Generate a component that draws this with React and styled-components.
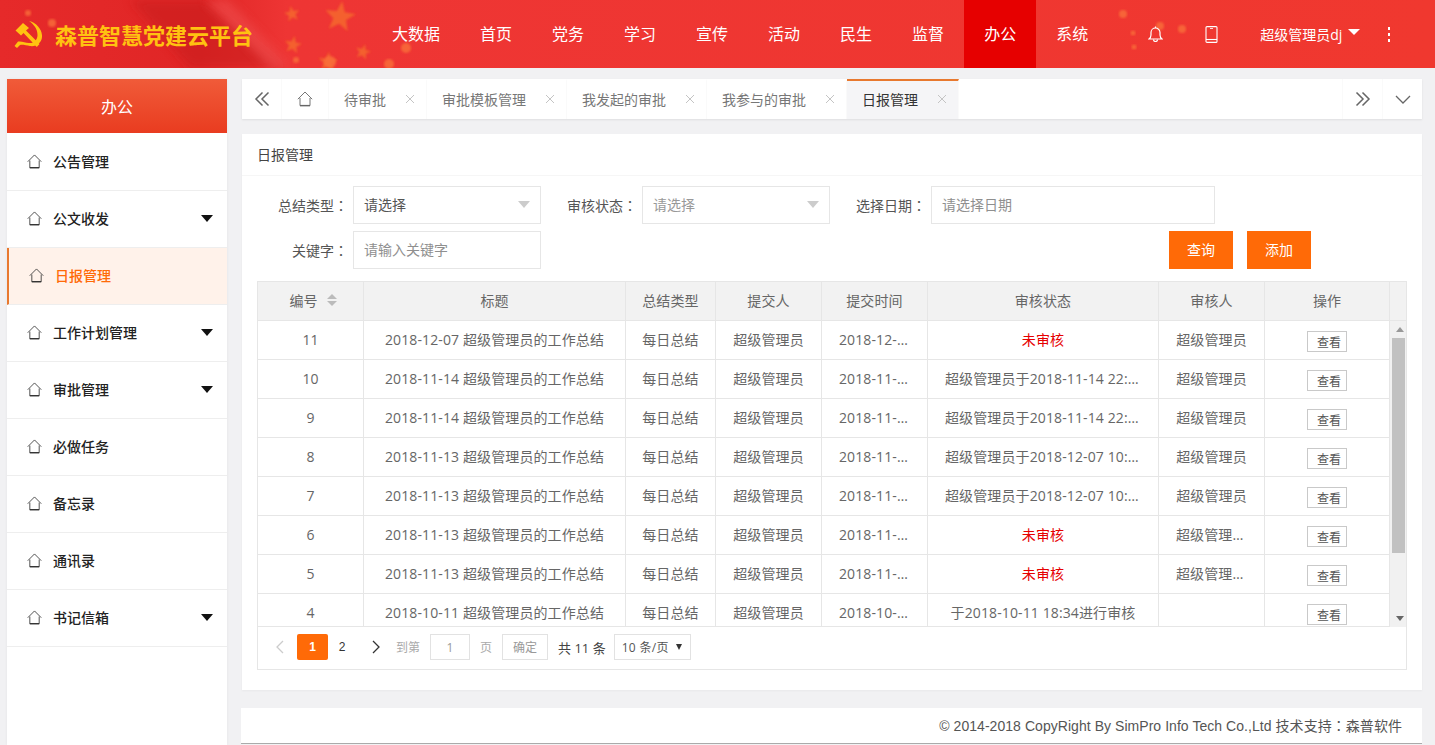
import React from 'react';
import styled, { createGlobalStyle } from 'styled-components';

const FONT = '"Open Sans", "Noto Sans CJK SC", sans-serif';
const ORANGE = '#ff6a07';
const COLUMNS = '106px 262px 90px 106px 106px 231px 106px 125px';

const GlobalStyle = createGlobalStyle`
  html, body {
    margin: 0;
    height: 745px;
    overflow: hidden;
    background: #f1f1f3;
    font-family: ${FONT};
    font-size: 14px;
    color: #666;
  }
  * { box-sizing: border-box; }
`;

const Page = styled.div`
  display: flex;
  flex-direction: column;
  height: 745px;
`;

const Header = styled.header`
  position: relative;
  display: flex;
  align-items: stretch;
  height: 68px;
  flex: none;
  background: #ee3531;
  color: #fff;
  overflow: hidden;
`;

const HeaderArt = styled.svg`
  position: absolute;
  inset: 0;
  width: 100%;
  height: 100%;
`;

const Brand = styled.div`
  position: relative;
  display: flex;
  align-items: center;
  gap: 13px;
  width: 372px;
  padding-left: 14px;
`;

const BrandName = styled.span`
  font-size: 22px;
  font-weight: 700;
  color: #ffc211;
  white-space: nowrap;
  font-family: "Noto Sans CJK SC", sans-serif;
`;

const Nav = styled.nav`
  position: relative;
  display: flex;
`;

const NavItem = styled.a`
  display: flex;
  align-items: center;
  justify-content: center;
  padding: 0 20px 2px;
  font-size: 16px;
  background: ${(p) => (p.$active ? '#e60000' : 'transparent')};
`;

const Actions = styled.div`
  position: relative;
  display: flex;
  align-items: center;
  margin-left: 19px;
`;

const ActionIcon = styled.span`
  display: flex;
  justify-content: center;
  width: 56px;
`;

const UserName = styled.span`
  display: flex;
  align-items: center;
  gap: 6px;
  margin-left: 21px;
  font-size: 14px;
  white-space: nowrap;
`;

const UserCaret = styled.i`
  width: 0;
  height: 0;
  margin-top: -5px;
  border-left: 6px solid transparent;
  border-right: 6px solid transparent;
  border-top: 6px solid #fff;
`;

const Dots = styled.span`
  display: flex;
  flex-direction: column;
  gap: 3px;
  margin-left: 28px;
  i {
    width: 2px;
    height: 3px;
    background: #fff;
  }
`;

const Body = styled.div`
  display: flex;
  flex: 1;
  min-height: 0;
  padding-top: 11px;
`;

const Sidebar = styled.aside`
  width: 220px;
  margin-left: 7px;
  flex: none;
  background: #fff;
  box-shadow: 0 0 3px rgba(0, 0, 0, 0.06);
`;

const SideTitle = styled.div`
  display: flex;
  align-items: center;
  justify-content: center;
  height: 54px;
  margin-bottom: 1px;
  color: #fff;
  font-size: 16px;
  background: linear-gradient(#f05b39, #e93c20);
`;

const SideItem = styled.a`
  display: flex;
  align-items: center;
  gap: 11px;
  height: 57px;
  padding: 0 14px 2px 20px;
  font-size: 14px;
  font-weight: 500;
  color: ${(p) => (p.$active ? ORANGE : '#222')};
  background: ${(p) => (p.$active ? '#fff2ea' : '#fff')};
  border-bottom: 1px solid #eeeeee;
  border-left: ${(p) => (p.$active ? '2px solid #e8792f' : 'none')};
`;

const SideCaret = styled.i`
  width: 0;
  height: 0;
  margin-left: auto;
  border-left: 6.5px solid transparent;
  border-right: 6.5px solid transparent;
  border-top: 7px solid #111;
`;

const Main = styled.main`
  display: flex;
  flex-direction: column;
  width: 1180px;
  margin-left: 15px;
`;

const TabBar = styled.div`
  display: flex;
  align-items: stretch;
  height: 40px;
  flex: none;
  background: #fff;
  box-shadow: 0 1px 2px rgba(0, 0, 0, 0.08);
`;

const TabControl = styled.span`
  display: flex;
  align-items: center;
  justify-content: center;
  flex: none;
  width: ${(p) => p.$w || 40}px;
  border-right: ${(p) => (p.$edge === 'right' ? '1px solid #fafafa' : 'none')};
  border-left: ${(p) => (p.$edge === 'left' ? '1px solid #fafafa' : 'none')};
`;

const Tab = styled.div`
  display: flex;
  align-items: center;
  padding: 0 11px 2px 15px;
  font-size: 14px;
  white-space: nowrap;
  color: ${(p) => (p.$active ? '#333' : '#777')};
  background: ${(p) => (p.$active ? '#f5f5f7' : '#fff')};
  border-right: 1px solid #fafafa;
  border-top: 2px solid ${(p) => (p.$active ? '#e8792f' : 'transparent')};
`;

const TabClose = styled.svg`
  width: 10px;
  height: 10px;
  margin-left: 19px;
`;

const TabSpacer = styled.div`
  flex: 1;
`;

const Card = styled.section`
  height: 556px;
  margin-top: 15px;
  flex: none;
  background: #fff;
  box-shadow: 0 1px 2px rgba(0, 0, 0, 0.04);
`;

const CardTitle = styled.div`
  display: flex;
  align-items: center;
  height: 42px;
  padding: 0 0 2px 15px;
  font-size: 14px;
  color: #444;
  border-bottom: 1px solid #f6f6f6;
`;

const Filters = styled.div`
  display: flex;
  flex-direction: column;
  gap: 7px;
  padding: 10px 15px 12px;
`;

const FilterRow = styled.div`
  display: flex;
  align-items: center;
  height: 38px;
`;

const Label = styled.label`
  flex: none;
  width: ${(p) => p.$w}px;
  margin-left: ${(p) => p.$gap || 0}px;
  margin-right: 5px;
  text-align: right;
  white-space: nowrap;
  font-size: 14px;
  color: #555;
`;

const Colon = styled.span`
  font-family: "Noto Sans CJK TC", sans-serif;
`;

const Select = styled.div`
  display: flex;
  align-items: center;
  justify-content: space-between;
  width: 188px;
  height: 38px;
  padding: 0 10px 2px;
  font-size: 14px;
  color: ${(p) => (p.$muted ? '#999' : '#555')};
  border: 1px solid #e6e6e6;
  i {
    width: 0;
    height: 0;
    border-left: 6px solid transparent;
    border-right: 6px solid transparent;
    border-top: 7px solid #ccc;
  }
`;

const TextInput = styled.input`
  width: ${(p) => p.$w}px;
  height: 38px;
  padding: 0 10px 2px;
  font: 14px ${FONT};
  color: #555;
  border: 1px solid #e6e6e6;
  outline: none;
  &::placeholder { color: #8f8f8f; }
`;

const FilterButtons = styled.div`
  display: flex;
  gap: 14px;
  margin-left: auto;
  margin-right: 96px;
`;

const OrangeButton = styled.button`
  width: 64px;
  height: 38px;
  padding: 0 0 2px;
  border: none;
  color: #fff;
  background: ${ORANGE};
  font: 14px ${FONT};
`;

const TableBox = styled.div`
  height: 389px;
  margin: 0 15px;
  border: 1px solid #e6e6e6;
`;

const HeadRow = styled.div`
  display: grid;
  grid-template-columns: ${COLUMNS} 16px;
  height: 39px;
  background: #f2f2f2;
  border-bottom: 1px solid #e6e6e6;
`;

const TableBody = styled.div`
  display: flex;
  height: 306px;
`;

const Rows = styled.div`
  flex: 1;
  overflow: hidden;
  border-bottom: 1px solid #e6e6e6;
`;

const ScrollTrack = styled.div`
  display: flex;
  flex-direction: column;
  width: 16px;
  flex: none;
  background: #f1f1f1;
`;

const ScrollArrow = styled.span`
  display: flex;
  align-items: center;
  justify-content: center;
  height: 17px;
  padding-left: 3px;
  margin-top: ${(p) => (p.$down ? 'auto' : 0)};
  i {
    width: 0;
    height: 0;
    border-left: 4.5px solid transparent;
    border-right: 4.5px solid transparent;
    border-bottom: ${(p) => (p.$down ? 'none' : '5px solid #999')};
    border-top: ${(p) => (p.$down ? '5px solid #666' : 'none')};
  }
`;

const ScrollThumb = styled.div`
  height: 215px;
  margin: 0 1px 0 2px;
  background: #c1c1c1;
`;

const Row = styled.div`
  display: grid;
  grid-template-columns: ${COLUMNS};
  height: 39px;
  border-bottom: 1px solid #e6e6e6;
`;

const Cell = styled.div`
  padding: 0 ${(p) => (p.$tight ? 5 : 17)}px;
  line-height: 37px;
  text-align: center;
  overflow: hidden;
  white-space: nowrap;
  text-overflow: ellipsis;
  font-size: 14px;
  letter-spacing: 0.12px;
  color: ${(p) => (p.$alert ? '#e60000' : '#666')};
  border-right: 1px solid #e6e6e6;
`;

const HeadCell = styled(Cell)`
  display: flex;
  align-items: center;
  justify-content: center;
  gap: 9px;
  padding: 0 ${(p) => (p.$sort ? '12px' : '5px')} 2px ${(p) => (p.$sort ? '17px' : '5px')};
  line-height: normal;
  &:last-child { border-right: none; }
`;

const SortIcon = styled.span`
  display: flex;
  flex-direction: column;
  gap: 2px;
  i {
    width: 0;
    height: 0;
    border-left: 5px solid transparent;
    border-right: 5px solid transparent;
  }
  i:first-child { border-bottom: 5px solid #bbb; }
  i:last-child { border-top: 5px solid #bbb; }
`;

const ViewButton = styled.button`
  display: block;
  width: 40px;
  height: 21px;
  margin: 10px auto 0;
  padding: 2px 0 0 4px;
  background: #fff;
  border: 1px solid #c9c9c9;
  color: #555;
  font: 12px/1 ${FONT};
`;

const ActionCell = styled(Cell)`
  padding: 0;
`;

const Pager = styled.div`
  display: flex;
  align-items: center;
  height: 42px;
  padding: 0 0 2px 6px;
  font-size: 12px;
`;

const PagerArrow = styled.span`
  display: flex;
  align-items: center;
  justify-content: center;
  width: ${(p) => p.$w}px;
  margin-right: ${(p) => p.$after || 0}px;
`;

const PageNumber = styled.span`
  display: flex;
  align-items: center;
  justify-content: center;
  width: ${(p) => (p.$active ? 31 : 28)}px;
  height: 26px;
  border-radius: 2px;
  font-family: "Liberation Sans", sans-serif;
  font-size: 12px;
  font-weight: ${(p) => (p.$active ? 700 : 400)};
  color: ${(p) => (p.$active ? '#fff' : '#333')};
  background: ${(p) => (p.$active ? ORANGE : 'transparent')};
`;

const PagerText = styled.span`
  margin: 0 10px 0 ${(p) => p.$before || 0}px;
  font-size: ${(p) => p.$size || 12}px;
  color: ${(p) => p.$color || '#aaa'};
  white-space: nowrap;
`;

const PageInput = styled.input`
  width: 40px;
  height: 26px;
  text-align: center;
  font: 12px ${FONT};
  color: #999;
  border: 1px solid #e2e2e2;
  outline: none;
`;

const ConfirmButton = styled.button`
  width: 46px;
  height: 26px;
  padding: 0;
  background: #fff;
  border: 1px solid #e2e2e2;
  color: #999;
  font: 12px ${FONT};
`;

const PageSize = styled.div`
  display: flex;
  align-items: center;
  justify-content: space-between;
  width: 77px;
  height: 26px;
  margin-left: -2px;
  padding: 0 8px 0 7px;
  font-size: 12px;
  letter-spacing: 0.3px;
  color: #555;
  border: 1px solid #e2e2e2;
  i {
    width: 0;
    height: 0;
    border-left: 3.5px solid transparent;
    border-right: 3.5px solid transparent;
    border-top: 6px solid #333;
  }
`;

const Footer = styled.footer`
  display: flex;
  align-items: center;
  justify-content: flex-end;
  height: 36px;
  margin-top: 18px;
  margin-left: -1px;
  padding: 0 20px 2px 0;
  flex: none;
  font-family: "Liberation Sans", "Noto Sans CJK SC", sans-serif;
  font-size: 14px;
  letter-spacing: 0.05px;
  color: #555;
  background: #fff;
  border-bottom: 1px solid #aaa;
`;

const HomeIcon = ({ size = 16, color = '#333' }) => (
  <svg width={size} height={size} viewBox="0 0 16 16" fill="none" stroke={color} strokeWidth="0.9">
    <path d="M0.8 8.2 8 1 15.2 8.2M3 7v7.6h10V7" />
    <path d="M3 14.6h10" strokeWidth="1.4" />
  </svg>
);

const DoubleChevron = ({ flip }) => (
  <svg width="16" height="16" viewBox="0 0 16 16" fill="none" stroke="#666" strokeWidth="1.5">
    <path d={flip ? 'M1.5 1.5 8 8l-6.5 6.5M7.5 1.5 14 8l-6.5 6.5' : 'M14.5 1.5 8 8l6.5 6.5M8.5 1.5 2 8l6.5 6.5'} />
  </svg>
);

const Chevron = ({ dir, color = '#333' }) => (
  <svg width="9" height="14" viewBox="0 0 9 14" fill="none" stroke={color} strokeWidth="1.3">
    <path d={dir === 'left' ? 'M8 1 2 7l6 6' : 'M1 1l6 6-6 6'} />
  </svg>
);

const Cross = () => (
  <TabClose viewBox="0 0 10 10" stroke="#c4c4c4" strokeWidth="1">
    <path d="M1 1l8 8M9 1l-8 8" />
  </TabClose>
);

const starPoints = (cx, cy, r, rot) => {
  const pts = [];
  for (let i = 0; i < 10; i++) {
    const a = (rot + i * 36 - 90) * (Math.PI / 180);
    const d = i % 2 ? r * 0.42 : r;
    pts.push(`${(cx + d * Math.cos(a)).toFixed(1)},${(cy + d * Math.sin(a)).toFixed(1)}`);
  }
  return pts.join(' ');
};

const stars = [
  [340, 17, 16, 8],
  [292, 14, 8, -10],
  [293, 45, 9, 10],
  [363, 52, 8, 15],
  [328, 62, 10, 5],
];

const glows = [
  [28, 13, 3], [52, 23, 4], [406, 48, 5], [389, 64, 5], [330, 62, 6], [296, 60, 3],
  [1123, 14, 4], [1160, 26, 4], [1182, 29, 4], [1133, 33, 2.5], [1134, 47, 2.5], [1000, 2, 2],
];

const HeaderBackground = () => (
  <HeaderArt viewBox="0 0 1435 68" preserveAspectRatio="none">
    <defs>
      <linearGradient id="flagBase" x1="0" x2="1" y1="0" y2="0">
        <stop offset="0" stopColor="#e62a2a" />
        <stop offset="0.14" stopColor="#e02626" />
        <stop offset="0.2" stopColor="#ee3534" />
        <stop offset="1" stopColor="#f0382f" />
      </linearGradient>
      <filter id="soft"><feGaussianBlur stdDeviation="5" /></filter>
      <filter id="softer"><feGaussianBlur stdDeviation="1" /></filter>
    </defs>
    <rect width="1435" height="68" fill="url(#flagBase)" />
    <path d="M130 0H205L285 68H190Z" fill="#c81c1c" opacity="0.55" filter="url(#soft)" />
    <path d="M205 0H228L292 68H270Z" fill="#f05050" opacity="0.6" filter="url(#soft)" />
    {stars.map(([x, y, r, rot]) => (
      <polygon key={x} points={starPoints(x, y, r, rot)} fill="#f4612d" filter="url(#softer)" />
    ))}
    {glows.map(([x, y, r]) => (
      <circle key={`${x}-${y}`} cx={x} cy={y} r={r} fill="#f9703a" opacity="0.8" filter="url(#softer)" />
    ))}
  </HeaderArt>
);

const PartyEmblem = () => (
  <svg width="28" height="28" viewBox="0 0 28 28" fill="#ffc211">
    <path d="M15 1C23 3 28.500 10 28 17C27.600 23 22 27 16 26C12 25.400 9 24.500 6 25L3 28L.5 26L4 21.500C8 21 11 22.500 15 23C20 23.500 23.500 20 23.500 15C23.500 9 20 4.500 15 1Z" />
    <path d="M1.500 10.500 9 3 15 8 12 10.500 25.500 24 22.800 27 9.500 13 7 15.500Z" />
  </svg>
);

const BellIcon = () => (
  <svg width="15" height="16" viewBox="0 0 15 16" fill="none" stroke="#fff" strokeWidth="1.2">
    <path d="M1 13h13c-1.400-1-2-2.200-2-4V6.500a4.500 4.500 0 0 0-9 0V9c0 1.800-.6 3-2 4Z" />
    <path d="M5.500 13.500a2 2 0 0 0 4 0M7.500 .6V2" />
  </svg>
);

const PhoneIcon = () => (
  <svg width="13" height="17" viewBox="0 0 13 17" fill="none" stroke="#fff" strokeWidth="1.1">
    <rect x="1" y="0.6" width="11" height="15.800" rx="1" />
    <path d="M1 13.500h11" />
    <path d="M5 2.500h3" strokeWidth="0.8" />
  </svg>
);

const navItems = ['大数据', '首页', '党务', '学习', '宣传', '活动', '民生', '监督', '办公', '系统'];

const sideItems = [
  { name: '公告管理' },
  { name: '公文收发', sub: true },
  { name: '日报管理', active: true },
  { name: '工作计划管理', sub: true },
  { name: '审批管理', sub: true },
  { name: '必做任务' },
  { name: '备忘录' },
  { name: '通讯录' },
  { name: '书记信箱', sub: true },
];

const tabs = ['待审批', '审批模板管理', '我发起的审批', '我参与的审批', '日报管理'];

const headers = ['标题', '总结类型', '提交人', '提交时间', '审核状态', '审核人', '操作'];

const admin = '超级管理员';

const reports = [
  { id: 11, day: '2018-12-07', time: '2018-12-07 17:20', status: '未审核', alert: true, who: admin },
  { id: 10, day: '2018-11-14', time: '2018-11-14 22:10', status: '超级管理员于2018-11-14 22:31进行审核', who: admin },
  { id: 9, day: '2018-11-14', time: '2018-11-14 22:05', status: '超级管理员于2018-11-14 22:30进行审核', who: admin },
  { id: 8, day: '2018-11-13', time: '2018-11-13 18:40', status: '超级管理员于2018-12-07 10:12进行审核', who: admin },
  { id: 7, day: '2018-11-13', time: '2018-11-13 18:32', status: '超级管理员于2018-12-07 10:11进行审核', who: admin },
  { id: 6, day: '2018-11-13', time: '2018-11-13 18:20', status: '未审核', alert: true, who: '超级管理员,张三' },
  { id: 5, day: '2018-11-13', time: '2018-11-13 18:15', status: '未审核', alert: true, who: '超级管理员,张三' },
  { id: 4, day: '2018-10-11', time: '2018-10-11 18:30', status: '于2018-10-11 18:34进行审核', who: '' },
];

const App = () => (
  <Page>
    <GlobalStyle />
    <Header>
      <HeaderBackground />
      <Brand>
        <PartyEmblem />
        <BrandName>森普智慧党建云平台</BrandName>
      </Brand>
      <Nav>
        {navItems.map((item) => (
          <NavItem key={item} $active={item === '办公'}>{item}</NavItem>
        ))}
      </Nav>
      <Actions>
        <ActionIcon><BellIcon /></ActionIcon>
        <ActionIcon><PhoneIcon /></ActionIcon>
        <UserName>超级管理员dj<UserCaret /></UserName>
        <Dots><i /><i /><i /></Dots>
      </Actions>
    </Header>
    <Body>
      <Sidebar>
        <SideTitle>办公</SideTitle>
        {sideItems.map((item) => (
          <SideItem key={item.name} $active={item.active}>
            <HomeIcon size={15} />
            {item.name}
            {item.sub && <SideCaret />}
          </SideItem>
        ))}
      </Sidebar>
      <Main>
        <TabBar>
          <TabControl $edge="right"><DoubleChevron /></TabControl>
          <TabControl $w={47} $edge="right"><HomeIcon color="#666" /></TabControl>
          {tabs.map((tab) => (
            <Tab key={tab} $active={tab === '日报管理'}>
              {tab}
              <Cross />
            </Tab>
          ))}
          <TabSpacer />
          <TabControl $edge="left"><DoubleChevron flip /></TabControl>
          <TabControl $edge="left">
            <svg width="16" height="9" viewBox="0 0 16 9" fill="none" stroke="#666" strokeWidth="1.3">
              <path d="M1 1l7 7 7-7" />
            </svg>
          </TabControl>
        </TabBar>
        <Card>
          <CardTitle>日报管理</CardTitle>
          <Filters>
            <FilterRow>
              <Label $w={91}>总结类型<Colon>：</Colon></Label>
              <Select>请选择<i /></Select>
              <Label $w={70} $gap={26}>审核状态<Colon>：</Colon></Label>
              <Select $muted>请选择<i /></Select>
              <Label $w={70} $gap={26}>选择日期<Colon>：</Colon></Label>
              <TextInput $w={284} placeholder="请选择日期" />
            </FilterRow>
            <FilterRow>
              <Label $w={91}>关键字<Colon>：</Colon></Label>
              <TextInput $w={188} placeholder="请输入关键字" />
              <FilterButtons>
                <OrangeButton>查询</OrangeButton>
                <OrangeButton>添加</OrangeButton>
              </FilterButtons>
            </FilterRow>
          </Filters>
          <TableBox>
            <HeadRow>
              <HeadCell $sort>编号<SortIcon><i /><i /></SortIcon></HeadCell>
              {headers.map((h) => <HeadCell key={h}>{h}</HeadCell>)}
              <HeadCell />
            </HeadRow>
            <TableBody>
              <Rows>
                {reports.map((r) => (
                  <Row key={r.id}>
                    <Cell>{r.id}</Cell>
                    <Cell>{r.day} 超级管理员的工作总结</Cell>
                    <Cell $tight>每日总结</Cell>
                    <Cell>超级管理员</Cell>
                    <Cell>{r.time}</Cell>
                    <Cell $alert={r.alert}>{r.status}</Cell>
                    <Cell>{r.who}</Cell>
                    <ActionCell><ViewButton>查看</ViewButton></ActionCell>
                  </Row>
                ))}
              </Rows>
              <ScrollTrack>
                <ScrollArrow><i /></ScrollArrow>
                <ScrollThumb />
                <ScrollArrow $down><i /></ScrollArrow>
              </ScrollTrack>
            </TableBody>
            <Pager>
              <PagerArrow $w={30} $after={3}><Chevron dir="left" color="#ccc" /></PagerArrow>
              <PageNumber $active>1</PageNumber>
              <PageNumber>2</PageNumber>
              <PagerArrow $w={40}><Chevron dir="right" /></PagerArrow>
              <PagerText>到第</PagerText>
              <PageInput defaultValue="1" />
              <PagerText $before={10}>页</PagerText>
              <ConfirmButton>确定</ConfirmButton>
              <PagerText $before={10} $size={13} $color="#444">共 11 条</PagerText>
              <PageSize>10 条/页<i /></PageSize>
            </Pager>
          </TableBox>
        </Card>
        <Footer>© 2014-2018 CopyRight By SimPro Info Tech Co.,Ltd 技术支持<Colon>：</Colon>森普软件</Footer>
      </Main>
    </Body>
  </Page>
);

export default App;
